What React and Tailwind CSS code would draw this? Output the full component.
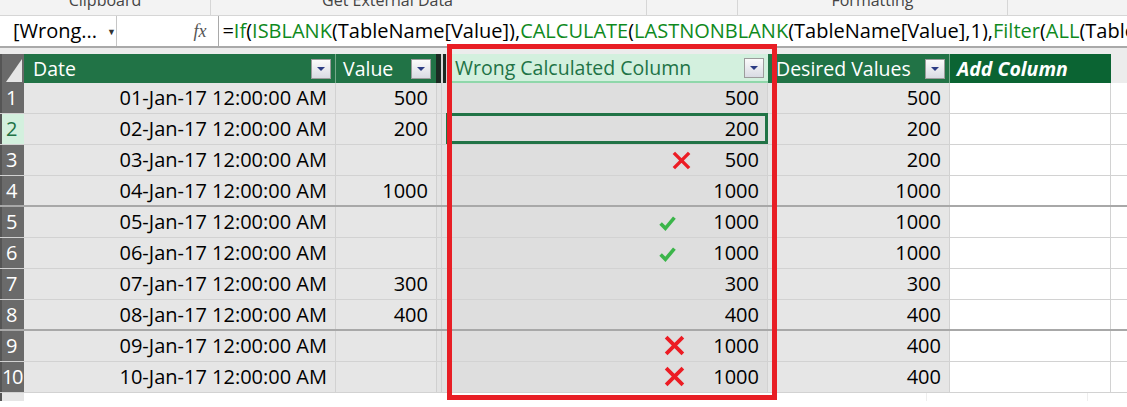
import React from "react";

const FONT = "font-['Open_Sans','Noto_Sans',sans-serif]";

const rows = [
  { n: 1, date: "01-Jan-17 12:00:00 AM", v: "500", w: "500", d: "500" },
  { n: 2, date: "02-Jan-17 12:00:00 AM", v: "200", w: "200", d: "200", sel: true },
  { n: 3, date: "03-Jan-17 12:00:00 AM", v: "", w: "500", d: "200", mark: "x1" },
  { n: 4, date: "04-Jan-17 12:00:00 AM", v: "1000", w: "1000", d: "1000", thick: true },
  { n: 5, date: "05-Jan-17 12:00:00 AM", v: "", w: "1000", d: "1000", mark: "check" },
  { n: 6, date: "06-Jan-17 12:00:00 AM", v: "", w: "1000", d: "1000", mark: "check" },
  { n: 7, date: "07-Jan-17 12:00:00 AM", v: "300", w: "300", d: "300" },
  { n: 8, date: "08-Jan-17 12:00:00 AM", v: "400", w: "400", d: "400", thick: true },
  { n: 9, date: "09-Jan-17 12:00:00 AM", v: "", w: "1000", d: "400", mark: "x2" },
  { n: 10, date: "10-Jan-17 12:00:00 AM", v: "", w: "1000", d: "400", mark: "x2" },
];

function Dropdown() {
  return (
    <div className="w-[20px] h-[20px] border border-[#9c9c9c] bg-gradient-to-b from-[#fbfbfb] to-[#d9dbe3] flex items-center justify-center shrink-0">
      <svg width="10" height="6" viewBox="0 0 10 6">
        <path d="M1 1 L9 1 L5 5 Z" fill="#2c3c84" />
      </svg>
    </div>
  );
}

function RedX({ size }) {
  return (
    <svg width={size} height={size} viewBox="0 0 22 22">
      <path d="M3 3 L19 19 M19 3 L3 19" stroke="#ec1c24" strokeWidth="3.6" strokeLinecap="butt" />
    </svg>
  );
}

function Check() {
  return (
    <svg width="17" height="16" viewBox="0 0 16 15">
      <path d="M1.5 8 L6 12.5 L14.5 2.5" stroke="#3bb54a" strokeWidth="3.4" fill="none" strokeLinejoin="miter" />
    </svg>
  );
}

function F({ children }) {
  return <span className="text-[#0f8a1d]">{children}</span>;
}

export default function App() {
  return (
    <div className={`${FONT} relative w-[1127px] h-[407px] overflow-hidden bg-white text-black`}>
      {/* Ribbon group labels (cut) */}
      <div className="h-[16px] bg-[#f3f3f3] border-b border-[#d6d6d6] flex overflow-hidden text-[16px] text-[#444] leading-[16px]">
        <div className="w-[211px] border-r border-[#d6d6d6] flex justify-center">
          <span className="-mt-[8px]">Clipboard</span>
        </div>
        <div className="w-[436px] border-r border-[#d6d6d6] flex justify-center pr-[82px]">
          <span className="-mt-[8px]">Get External Data</span>
        </div>
        <div className="w-[91px] border-r border-[#d6d6d6]" />
        <div className="w-[270px] border-r border-[#d6d6d6] flex justify-center">
          <span className="-mt-[8px]">Formatting</span>
        </div>
        <div className="flex-1" />
      </div>

      {/* Formula bar */}
      <div className="h-[32px] bg-white border-b-2 border-[#a9a9a9] flex items-center text-[20px] leading-none whitespace-nowrap">
        <div className="w-[123px] h-full border-r border-[#c6c6c6] flex items-center pl-[13px]">
          <span>[Wrong...</span>
          <span className="ml-[10px] text-[9px] text-[#333]">▼</span>
        </div>
        <div className="w-[126px] h-full border-r border-[#a9a9a9] flex items-center justify-end pr-[12px]">
          <span className="font-['Liberation_Serif',serif] italic text-[18px] text-[#555]">fx</span>
        </div>
        <div className="pl-[3px] overflow-hidden">
          =<F>If</F>(<F>ISBLANK</F>(TableName[Value]),<F>CALCULATE</F>(<F>LASTNONBLANK</F>(TableName[Value],1),<F>Filter</F>(<F>ALL</F>(TableName),TableName[Date]
        </div>
      </div>

      <div className="h-[6px] bg-[#ececec]" />

      {/* Header row */}
      <div className="flex h-[29px] text-[19.5px] leading-none bg-[#ececec]">
        <div className="w-[24px] border-l-2 border-[#555] bg-[#6a6a6a] flex items-end justify-end">
          <svg width="20" height="27" viewBox="0 0 20 27">
            <path d="M2 26 L18 3 L18 26 Z" fill="#e6e6e6" />
          </svg>
        </div>
        <div className="w-[312px] bg-[#217346] text-white flex items-center pl-[9px] pr-[4px] border-r border-[#74a98a]">
          <span className="flex-1">Date</span>
          <Dropdown />
        </div>
        <div className="w-[100px] bg-[#217346] text-white flex items-center pl-[7px] pr-[5px]">
          <span className="flex-1">Value</span>
          <Dropdown />
        </div>
        <div className="w-[11px] flex bg-[#d8d8d8]">
          <div className="w-[5px] bg-[#1c2a22]" />
          <div className="w-[2px]" />
          <div className="w-[3px] bg-[#1c2a22]" />
        </div>
        <div className="w-[321px] bg-[#d3f0de] text-[#217346] flex items-center pl-[8px] pr-[4px] border-b-2 border-[#8fd7aa]">
          <span className="flex-1">Wrong Calculated Column</span>
          <Dropdown />
        </div>
        <div className="w-[182px] bg-[#217346] text-white flex items-center pl-[8px] pr-[4px] border-r border-[#74a98a]">
          <span className="flex-1">Desired Values</span>
          <Dropdown />
        </div>
        <div className="w-[161px] bg-[#0b6433] text-white flex items-center pl-[7px] font-bold italic">
          Add Column
        </div>
        <div className="flex-1 bg-[#ececec]" />
      </div>

      {/* Data rows */}
      {rows.map((r) => {
        const bb = r.thick ? "border-b-2 border-[#a8a8a8]" : "border-b border-[#d2d2d2]";
        return (
          <div key={r.n} className={`flex h-[31px] text-[20px] leading-none ${bb}`}>
            <div
              className={`w-[24px] border-l-2 border-[#555] flex items-center ${
                r.sel ? "bg-[#d3f0de] text-[#217346]" : "bg-[#6a6a6a] text-white"
              } ${r.n === 10 ? "justify-start pl-0 tracking-[-1.5px]" : "justify-start pl-[4px]"}`}
            >
              {r.n}
            </div>
            <div className="w-[312px] bg-[#e6e6e6] border-r border-[#d2d2d2] flex items-center justify-end pr-[8px]">
              {r.date}
            </div>
            <div className="w-[100px] bg-[#e6e6e6] flex items-center justify-end pr-[8px]">{r.v}</div>
            <div className="w-[11px] bg-[#e3e3e3] flex">
              <div className="w-[1px] bg-[#d0d0d0]" />
              <div className="w-[4px]" />
              <div className="w-[1px] bg-[#d0d0d0]" />
            </div>
            <div className="relative w-[321px] bg-[#dedede] border-r border-[#d2d2d2] flex items-center justify-end pr-[8px]">
              {r.mark === "x1" && (
                <div className="absolute left-[224px] top-[5px]">
                  <RedX size={21} />
                </div>
              )}
              {r.mark === "x2" && (
                <div className="absolute left-[216px] top-[3px]">
                  <RedX size={23} />
                </div>
              )}
              {r.mark === "check" && (
                <div className="absolute left-[212px] top-[8px]">
                  <Check />
                </div>
              )}
              {r.sel && <div className="absolute -left-[1px] -top-[1px] -right-[1px] bottom-0 border-[3px] border-[#217346]" />}
              <span className="relative">{r.w}</span>
            </div>
            <div className="w-[182px] bg-[#e6e6e6] border-r border-[#d2d2d2] flex items-center justify-end pr-[8px]">
              {r.d}
            </div>
            <div className="w-[161px] bg-white border-r border-[#d2d2d2]" />
            <div className="flex-1 bg-white" />
          </div>
        );
      })}

      {/* Stub below */}
      <div className="flex h-[8px]">
        <div className="w-[24px] border-l-2 border-[#555] bg-[#e6e6e6]" />
        <div className="w-[902px]" />
        <div className="w-[1px] bg-[#eeeeee]" />
        <div className="w-[160px]" />
        <div className="w-[1px] bg-[#eeeeee]" />
      </div>

      {/* Red highlight rectangle */}
      <div className="absolute left-[447px] top-[44px] w-[330px] h-[356px] border-[5px] border-[#e81e25] pointer-events-none" />
    </div>
  );
}
